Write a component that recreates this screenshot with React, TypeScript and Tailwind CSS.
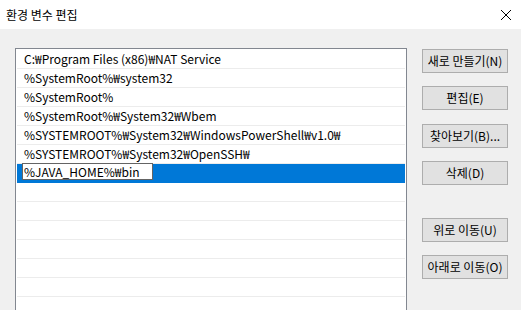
import React from "react";

const rows = [
  "C:₩Program Files (x86)₩NAT Service",
  "%SystemRoot%₩system32",
  "%SystemRoot%",
  "%SystemRoot%₩System32₩Wbem",
  "%SYSTEMROOT%₩System32₩WindowsPowerShell₩v1.0₩",
  "%SYSTEMROOT%₩System32₩OpenSSH₩",
];

function Btn({ label, className = "" }: { label: string; className?: string }) {
  return (
    <div
      className={`w-[86px] h-[24px] bg-[#e1e1e1] border border-[#adadad] flex items-center justify-center text-[12px] leading-[16px] text-black whitespace-nowrap ${className}`}
    >
      {label}
    </div>
  );
}

export default function App() {
  const font = { fontFamily: '"Noto Sans CJK KR", "Noto Sans", sans-serif' };
  return (
    <div className="w-[521px] h-[310px] overflow-hidden bg-[#f0f0f0] flex flex-col" style={font}>
      <div className="h-[29px] bg-white flex items-center justify-between pl-[6px] pr-[9px] shrink-0">
        <span className="text-[12px] leading-[16px] text-black">환경 변수 편집</span>
        <svg width="12" height="12" viewBox="0 0 12 12">
          <path d="M1 1 L11 11 M11 1 L1 11" stroke="#000" strokeWidth="1" fill="none" />
        </svg>
      </div>
      <div className="flex flex-1 pt-[19px] pl-[15px]">
        <div className="w-[392px] h-[300px] bg-white border border-[#828790] pt-[1px] px-[1px] shrink-0">
          {rows.map((r) => (
            <div
              key={r}
              className="h-[19px] border-b border-[#ececec] pl-[7px] flex items-center text-[12px] leading-[16px] text-black whitespace-nowrap"
            >
              {r}
            </div>
          ))}
          <div className="h-[19px] bg-[#0078d7] flex items-start pl-[5px]">
            <div className="w-[131px] h-[17px] bg-white border border-[#646464] pl-[1px] flex items-center text-[12px] leading-[16px] text-black -mt-[1px]">
              %JAVA_HOME%₩bin
            </div>
          </div>
          {[0, 1, 2, 3, 4, 5, 6].map((i) => (
            <div key={i} className="h-[19px] border-b border-[#ececec]" />
          ))}
        </div>
        <div className="flex flex-col pl-[15px] pt-[1px]">
          <Btn label="새로 만들기(N)" />
          <Btn label="편집(E)" className="mt-[13px]" />
          <Btn label="찾아보기(B)..." className="mt-[14px]" />
          <Btn label="삭제(D)" className="mt-[13px]" />
          <Btn label="위로 이동(U)" className="mt-[33px]" />
          <Btn label="아래로 이동(O)" className="mt-[13px]" />
        </div>
      </div>
    </div>
  );
}
